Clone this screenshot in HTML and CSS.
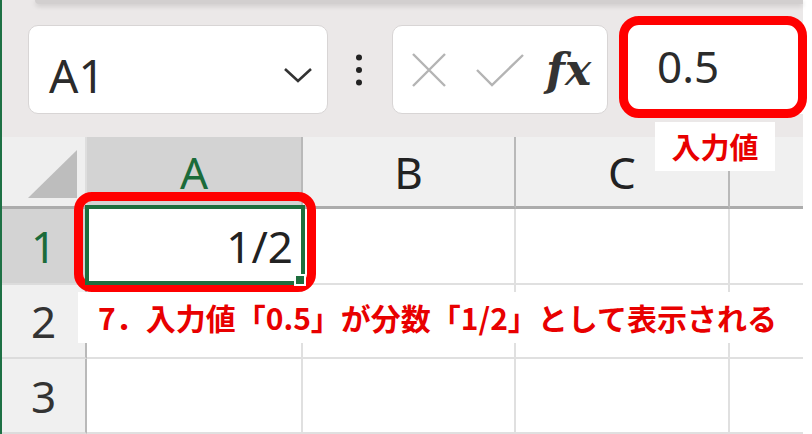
FILE: index.html
```html
<!doctype html>
<html lang="ja">
    <head>
        <meta charset="UTF-8" />
        <meta name="viewport" content="width=device-width, initial-scale=1.0" />
        <title>分数の表示</title>
        <link rel="stylesheet" href="styles.css">
    </head>
    <body>
        <div class="sheet">
            <div class="ribbon-edge"></div>

            <!-- Formula bar -->
            <div class="formula-bar">
                <div class="name-box">
                    <span>A1</span>
                    <svg class="chevron" width="30" height="16" viewBox="0 0 30 16">
                        <polyline points="2,2 15,14 28,2" fill="none" stroke="#333" stroke-width="2.6" />
                    </svg>
                </div>
                <svg class="more-dots" width="8" height="32" viewBox="0 0 8 32">
                    <circle cx="4" cy="3.5" r="3" fill="#222" />
                    <circle cx="4" cy="16" r="3" fill="#222" />
                    <circle cx="4" cy="28.5" r="3" fill="#222" />
                </svg>
                <div class="fx-box">
                    <svg class="icon-cancel" width="36" height="36" viewBox="0 0 36 36">
                        <path d="M2 2 L34 34 M34 2 L2 34" stroke="#b4b4b4" stroke-width="2.4" />
                    </svg>
                    <svg class="icon-enter" width="48" height="34" viewBox="0 0 48 34">
                        <polyline points="1,17 16,32 47,2" fill="none" stroke="#b4b4b4" stroke-width="2.4" />
                    </svg>
                    <span class="fx">fx</span>
                </div>
                <div class="formula-input">0.5</div>
            </div>

            <!-- Grid -->
            <div class="grid">
                <div class="corner">
                    <svg width="49" height="48" viewBox="0 0 49 48">
                        <polygon points="49,0 49,48 0,48" fill="#bdbdbd" />
                    </svg>
                </div>
                <div class="col-head selected">A</div>
                <div class="col-head">B</div>
                <div class="col-head">C</div>
                <div class="col-head last"></div>

                <div class="row-head selected">1</div>
                <div class="cell active">1/2<span class="fill-handle"></span></div>
                <div class="cell"></div>
                <div class="cell"></div>
                <div class="cell last"></div>

                <div class="row-head">2</div>
                <div class="cell"></div>
                <div class="cell"></div>
                <div class="cell"></div>
                <div class="cell last"></div>

                <div class="row-head">3</div>
                <div class="cell"></div>
                <div class="cell"></div>
                <div class="cell"></div>
                <div class="cell last"></div>
            </div>
        </div>

        <!-- Annotations -->
        <div class="callout callout-input"></div>
        <div class="tag">入力値</div>
        <div class="callout callout-cell"></div>
        <div class="note">7．入力値「0.5」が分数「1/2」として表示される</div>
    </body>
</html>
```

FILE: styles.css
```css
body {
    margin: 0;
    width: 812px;
    height: 434px;
    overflow: hidden;
    position: relative;
    background-color: #fff;
    font-family: "Noto Sans", "Noto Sans CJK JP", sans-serif;
    color: #2b2b2b;
}
.sheet {
    width: 801px;
    border-left: 2px solid #1e7145;
    background-color: #ebe8e8;
}
.ribbon-edge {
    height: 4px;
    margin-left: 33px;
    background-color: #d2cfcf;
    border-bottom-left-radius: 6px;
    box-shadow: 0 2px 5px rgba(0, 0, 0, 0.15);
}
.formula-bar {
    display: flex;
    align-items: center;
    height: 133px;
    padding: 0 0 2px 26px;
    box-sizing: border-box;
}
.name-box {
    display: flex;
    align-items: center;
    justify-content: space-between;
    width: 300px;
    height: 89px;
    box-sizing: border-box;
    padding: 10px 14px 0 20px;
    background-color: #fff;
    border: 1px solid #d8d5d5;
    border-radius: 10px;
    font-size: 46px;
}
.more-dots {
    margin-left: 27px;
}
.fx-box {
    display: flex;
    align-items: center;
    width: 216px;
    height: 89px;
    box-sizing: border-box;
    margin-left: 29px;
    padding-left: 18px;
    background-color: #fff;
    border: 1px solid #d8d5d5;
    border-radius: 10px;
}
.icon-enter {
    margin-left: 29px;
}
.fx {
    margin-left: 22px;
    font-family: "DejaVu Serif", serif;
    font-style: italic;
    font-weight: bold;
    font-size: 44px;
    color: #333;
}
.formula-input {
    display: flex;
    align-items: center;
    flex: 1;
    height: 89px;
    box-sizing: border-box;
    margin-left: 19px;
    padding: 0 0 8px 30px;
    background-color: #fff;
    border-radius: 10px 0 0 10px;
    font-size: 44px;
}
.grid {
    display: grid;
    grid-template-columns: 85px 216px 213px 214px 73px;
    grid-template-rows: 72px 76px 74px 75px;
    background-color: #fff;
}
.grid > div {
    display: flex;
    align-items: center;
    justify-content: center;
    box-sizing: border-box;
    font-size: 44px;
}
.corner {
    background-color: #efefef;
    border-right: 2px solid #dedede;
    border-bottom: 3px solid #acacac;
}
.grid > .corner {
    align-items: flex-end;
    justify-content: flex-end;
    padding: 0 8px 8px 0;
}
.col-head {
    background-color: #f0f0f0;
    border-right: 2px solid #b9b9b9;
    border-bottom: 3px solid #acacac;
    color: #222;
}
.row-head {
    background-color: #f0f0f0;
    border-right: 2px solid #b9b9b9;
    border-bottom: 2px solid #dcdcdc;
    color: #333;
}
.col-head.selected,
.row-head.selected {
    background-color: #d3d3d3;
    color: #1b6b3a;
}
.cell {
    border-right: 2px solid #e0e0e0;
    border-bottom: 2px solid #e0e0e0;
}
.grid > .last {
    border-right: none;
}
.grid > .active {
    position: relative;
    justify-content: flex-end;
    padding-right: 8px;
    color: #222;
}
.active::after {
    content: "";
    position: absolute;
    top: -4px;
    left: -2px;
    right: -4px;
    bottom: -2px;
    border: 4px solid #1d6e3e;
    z-index: 1;
}
.fill-handle {
    position: absolute;
    right: -5px;
    bottom: -3px;
    width: 8px;
    height: 8px;
    background-color: #1d6e3e;
    border: 2px solid #fff;
    z-index: 2;
}
.callout {
    position: absolute;
    box-sizing: border-box;
    border: 9px solid #ff0000;
    border-radius: 20px;
}
.callout-input {
    left: 619px;
    top: 16px;
    width: 188px;
    height: 102px;
}
.callout-cell {
    left: 74px;
    top: 192px;
    width: 242px;
    height: 100px;
    border-radius: 18px;
}
.tag,
.note {
    position: absolute;
    background-color: #fff;
    color: #e80000;
    font-family: "Noto Sans CJK JP", sans-serif;
    font-weight: bold;
    font-size: 29px;
}
.tag {
    left: 655px;
    top: 122px;
    width: 120px;
    height: 49px;
    line-height: 49px;
    text-align: center;
}
.note {
    left: 78px;
    top: 292px;
    width: 700px;
    height: 51px;
    line-height: 51px;
    padding-left: 20px;
    box-sizing: border-box;
    white-space: nowrap;
    font-size: 30px;
}
```
